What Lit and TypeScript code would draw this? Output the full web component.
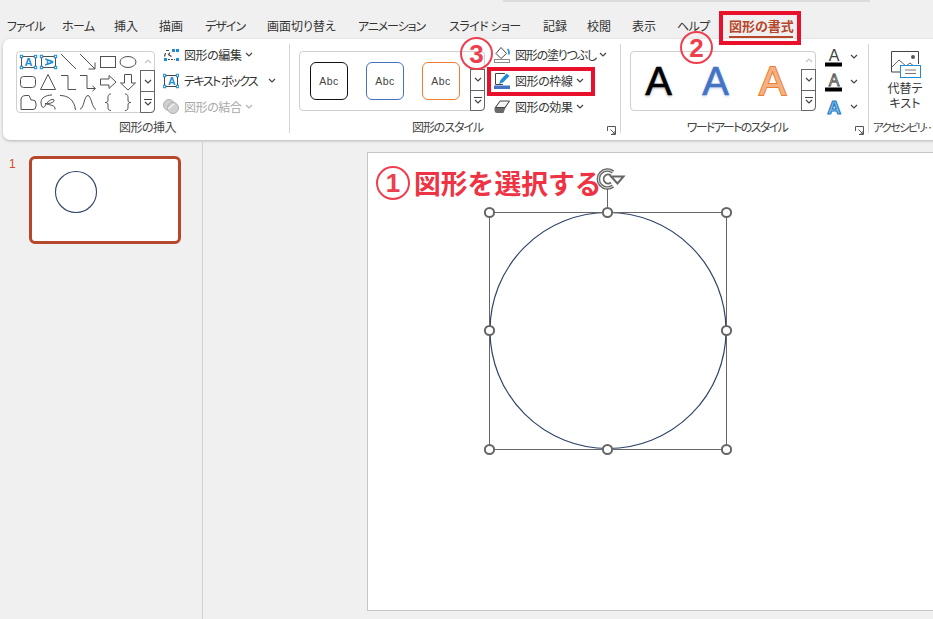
import { LitElement, css, html, svg } from 'lit'
import { customElement } from 'lit/decorators.js'

const TABS = [
  { label: 'ファイル', width: 55, tracking: -1 },
  { label: 'ホーム', width: 52, tracking: -0.6 },
  { label: '挿入', width: 45, tracking: 0 },
  { label: '描画', width: 46, tracking: 0 },
  { label: 'デザイン', width: 62, tracking: -1 },
  { label: '画面切り替え', width: 91, tracking: 0 },
  { label: 'アニメーション', width: 91, tracking: -1.1 },
  { label: 'スライド ショー', width: 94, tracking: -0.5 },
  { label: '記録', width: 44, tracking: 0 },
  { label: '校閲', width: 45, tracking: 0 },
  { label: '表示', width: 45, tracking: 0 },
  { label: 'ヘルプ', width: 52, tracking: -0.6 },
  { label: '図形の書式', width: 70, tracking: 0, active: true },
]

const STROKE = '#505050'
const BLUE = '#1f8dd6'

const handles = (x: number, y: number, w: number, h: number) =>
  [
    [x, y],
    [x + w, y],
    [x, y + h],
    [x + w, y + h],
  ].map(
    ([cx, cy]) =>
      svg`<rect x=${cx - 1.2} y=${cy - 1.2} width="2.4" height="2.4" fill="#fff" stroke=${BLUE} stroke-width="1"></rect>`
  )

const GALLERY_SHAPES = [
  svg`<rect x="3.5" y="4.5" width="14" height="11" fill="none" stroke=${STROKE}></rect>${handles(3.5, 4.5, 14, 11)}<text x="10.5" y="14" font-size="11" font-weight="700" text-anchor="middle" fill=${BLUE} stroke="none" font-family="Liberation Sans">A</text>`,
  svg`<rect x="3.5" y="4.5" width="14" height="11" fill="none" stroke=${STROKE}></rect>${handles(3.5, 4.5, 14, 11)}<text x="0" y="0" transform="translate(7 10) rotate(90)" font-size="11" font-weight="700" text-anchor="middle" fill=${BLUE} stroke="none" font-family="Liberation Sans">A</text>`,
  svg`<path d="M3 2L18 17"></path>`,
  svg`<path d="M2 2L17 17M17 10.5V17H10.5"></path>`,
  svg`<rect x="2.5" y="4.5" width="15" height="11"></rect>`,
  svg`<ellipse cx="10" cy="10" rx="8" ry="5.5"></ellipse>`,
  svg`<rect x="2.5" y="4.5" width="15" height="11" rx="3"></rect>`,
  svg`<path d="M10 2.5L17.5 17.5H2.5Z"></path>`,
  svg`<path d="M3 3.5H10V17.5H18"></path>`,
  svg`<path d="M2 3.5H9V16.5H17M14.5 14L17.5 16.5L14.5 19"></path>`,
  svg`<path d="M2.5 7H11V3.5L18 10L11 16.5V13H2.5Z"></path>`,
  svg`<path d="M6.5 2.5H13.5V11H17.5L10 18L2.5 11H6.5Z"></path>`,
  svg`<path d="M3 17.5V8Q3 3.5 8 3.5H11L13 8H15Q18 8 18 12V14Q18 17.5 15 17.5Z"></path>`,
  svg`<path d="M14 3C8 3 3 6 3 10C3 15 5 17 7 14C9 9 15 6 16 8C17 11 9 12 7 11.5C11 13 18 13 17 17.5"></path>`,
  svg`<path d="M2 3.5C10 3.5 16.5 8 17.5 18"></path>`,
  svg`<path d="M2 17C6 17 6 3.5 10 3.5C13 3.5 14 16 18 17.5"></path>`,
  svg`<path d="M13 2C9.5 2 10 5 10 8C10 10 9 10.5 7 10.5C9 10.5 10 11 10 13C10 16 9.5 18.5 13 18.5"></path>`,
  svg`<path d="M7 2C10.5 2 10 5 10 8C10 10 11 10.5 13 10.5C11 10.5 10 11 10 13C10 16 10.5 18.5 7 18.5"></path>`,
]

const ICONS = {
  edit: svg`<path d="M3 3.5H6M2.5 6L1.5 9.5M7 5.5L5.5 7.5L8.5 9.5" fill="none" stroke="#444" stroke-width="1.2"></path>
    <rect x="9" y="2" width="3" height="3" fill=${BLUE}></rect><rect x="13" y="2" width="3" height="3" fill=${BLUE}></rect>
    <rect x="1" y="11" width="3" height="3" fill=${BLUE}></rect><rect x="13" y="11" width="3" height="3" fill=${BLUE}></rect>
    <path d="M5 12.5H12" stroke="#444" stroke-dasharray="2 1"></path>`,
  textbox: svg`<rect x="1.5" y="2.5" width="13" height="11" fill="none" stroke="#444"></rect>${handles(1.5, 2.5, 13, 11)}<text x="8" y="12" font-size="10.5" font-weight="700" text-anchor="middle" fill=${BLUE} font-family="Liberation Sans">A</text>`,
  merge: svg`<circle cx="6" cy="7" r="5.5" fill="#d0d0d0" stroke="#b0b0b0"></circle><circle cx="10" cy="10" r="5.5" fill="#d0d0d0" stroke="#b0b0b0"></circle><path d="M5 11L11 6" stroke="#f4f4f4" stroke-width="1.2"></path>`,
  fill: svg`<path d="M7 0.5L12.5 6.5L7 11.5L2 6.5Z" fill="#fff" stroke="#444"></path><path d="M13.5 2Q16 5 14.5 7.5" fill="none" stroke=${BLUE} stroke-width="1.6"></path><rect x="0.5" y="12.5" width="15" height="3" fill="#fff" stroke="#8a8a8a"></rect>`,
  line: svg`<path d="M11 0.5H1.5V11.5H9" fill="none" stroke="#444"></path><path d="M5 11L6.5 7L12.5 0.5L15.5 3L9 9.5Z" fill=${BLUE}></path><rect x="0" y="12.5" width="16" height="3.5" fill="#4472c4"></rect>`,
  effect: svg`<path d="M0.5 10L6 3H15.5L11 11L9.5 15H3Q0 15 0.5 10Z" fill="#6a6a6a"></path><path d="M6 3H15.5L11 9.5H1.5Z" fill="#f4f4f4" stroke="#444"></path>`,
}

const icon = (content: unknown) => html`<svg class="btn-icon" viewBox="0 0 16 16">${content}</svg>`

const chevron = () => html`<svg class="chev" viewBox="0 0 8 5"><path d="M1 1L4 4L7 1"></path></svg>`

@customElement('app-root')
export class AppRoot extends LitElement {
  static styles = css`
    :host {
      display: block;
      position: relative;
      width: 933px;
      height: 619px;
      overflow: hidden;
      background: #f0f0f0;
      color: #333;
      font-family: 'Noto Sans CJK JP', 'Liberation Sans', sans-serif;
      font-size: 12px;
      font-feature-settings: 'palt';
    }

    .tabs {
      display: flex;
      align-items: center;
      height: 26px;
      padding: 13px 0 0 7px;
    }

    .tab {
      position: relative;
      flex: none;
      white-space: nowrap;
      line-height: 16px;
    }

    .tab.active {
      color: #b7472a;
      font-size: 13px;
      font-weight: 700;
    }

    .tab.active::after {
      content: '';
      position: absolute;
      left: 0;
      top: 18px;
      width: 64px;
      height: 2px;
      background: #b7472a;
    }

    .top-edge {
      position: absolute;
      left: 503px;
      top: 0;
      width: 367px;
      height: 2px;
      background: #dcdcdc;
    }

    .ribbon {
      display: flex;
      box-sizing: border-box;
      height: 101px;
      width: 960px;
      margin-left: 3px;
      background: #fff;
      border-radius: 7px;
      box-shadow: 0 1px 3px rgba(0, 0, 0, 0.25);
    }

    .group {
      position: relative;
      flex: none;
      display: flex;
      flex-direction: column;
      box-sizing: border-box;
    }

    .g1 {
      width: 286px;
    }
    .g2 {
      width: 330px;
    }
    .g3 {
      width: 247px;
    }
    .g4 {
      width: 64px;
    }

    .sep {
      flex: none;
      width: 1px;
      margin: 5px 0 7px;
      background: #d4d4d4;
    }

    .body {
      display: flex;
      height: 80px;
      padding: 3px 0 0 9px;
      box-sizing: border-box;
    }

    .g1 .body {
      padding-left: 13px;
    }

    .g4 .body {
      padding-left: 0;
    }

    .label {
      height: 18px;
      line-height: 16px;
      text-align: center;
      color: #444;
      white-space: nowrap;
      padding-right: 15px;
    }

    .g1 .label {
      padding: 0 0 0 3px;
      letter-spacing: -0.5px;
    }

    .g2 .label {
      letter-spacing: -1.1px;
    }

    .g3 .label {
      letter-spacing: -1.6px;
    }

    .g4 .label {
      text-align: left;
      padding: 0 0 0 4px;
      font-size: 11.5px;
      letter-spacing: -1.8px;
    }

    .launcher {
      position: absolute;
      right: 4px;
      bottom: 5px;
      width: 9px;
      height: 9px;
    }

    .launcher path {
      fill: none;
      stroke: #555;
    }

    .gallery {
      flex: none;
      display: flex;
      box-sizing: border-box;
      width: 186px;
      height: 60px;
      margin-top: 9px;
      border: 1px solid #cfcfcf;
      border-radius: 4px;
    }

    .shapes {
      width: 139px;
      height: 62px;
    }

    .shape-grid {
      display: grid;
      grid-template-columns: repeat(6, 20px);
      grid-auto-rows: 20px;
      padding-left: 1px;
    }

    .shape-grid svg {
      width: 20px;
      height: 20px;
      display: block;
      fill: none;
      stroke: #505050;
      stroke-width: 1;
    }

    .scroller {
      display: flex;
      flex-direction: column;
      box-sizing: border-box;
      width: 15px;
      margin: -1px -1px -1px auto;
    }

    .scroll {
      flex: 1;
      display: flex;
      align-items: center;
      justify-content: center;
      box-sizing: border-box;
      border: 1px solid #666;
      margin-top: -1px;
      flex-direction: column;
    }

    .scroll:last-child {
      border-radius: 0 0 4px 0;
    }

    .scroll.up {
      border: 0;
      margin-top: 0;
    }

    .scroll.up .chev path {
      stroke: #c4c4c4;
    }

    .more-bar {
      width: 8px;
      height: 1px;
      margin-bottom: 1px;
      background: #444;
    }

    .chev {
      width: 8px;
      height: 5px;
      flex: none;
    }

    .chev path {
      fill: none;
      stroke: #444;
      stroke-width: 1.2;
    }

    .cmds {
      flex: none;
      display: flex;
      flex-direction: column;
      margin-left: 9px;
    }

    .g1 .cmds {
      margin-left: 8px;
    }

    .cmd {
      display: flex;
      align-items: center;
      gap: 5px;
      height: 26px;
      white-space: nowrap;
      letter-spacing: -0.4px;
    }

    .cmd.off {
      color: #a8a8a8;
    }

    .cmd .chev {
      margin-left: -2px;
    }

    .cmd.off .chev path {
      stroke: #b4b4b4;
    }

    .cmd.wide {
      letter-spacing: -1.5px;
    }

    .cmd.wide .chev {
      margin-left: 6px;
    }

    .cmd.tight {
      letter-spacing: -1.2px;
    }

    .btn-icon {
      width: 16px;
      height: 16px;
      flex: none;
    }

    .abc-row {
      display: flex;
      align-items: center;
      gap: 18px;
      padding-left: 10px;
    }

    .abc {
      display: flex;
      align-items: center;
      justify-content: center;
      box-sizing: border-box;
      width: 38px;
      height: 38px;
      border: 1.5px solid;
      border-radius: 6px;
      color: #444;
      font-family: 'Liberation Sans', sans-serif;
      font-size: 10.5px;
      letter-spacing: 0.4px;
    }

    .abc.black {
      border-color: #111;
    }
    .abc.blue {
      border-color: #4472c4;
    }
    .abc.orange {
      border-color: #ed7d31;
    }

    .wa-row {
      display: flex;
      align-items: center;
      padding-left: 14px;
      gap: 30px;
    }

    .wa {
      font-family: 'Liberation Sans', sans-serif;
      font-size: 40px;
      line-height: 44px;
      width: 27px;
      text-align: center;
      -webkit-text-stroke: 0.6px currentColor;
    }

    .wa.black {
      color: #000;
      text-shadow: 0 1px 3px rgba(0, 0, 0, 0.4);
    }

    .wa.blue {
      color: #4472c4;
      text-shadow: 0 1px 3px rgba(68, 114, 196, 0.4);
    }

    .wa.orange {
      color: #f4b183;
      -webkit-text-stroke: 2px #ed7d31;
      paint-order: stroke fill;
    }

    .wa-cmds {
      flex: none;
      display: flex;
      flex-direction: column;
      margin: 2px 0 0 9px;
    }

    .wa-cmd {
      display: flex;
      align-items: center;
      gap: 7px;
      height: 26px;
    }

    .wa-icon {
      width: 18px;
      height: 20px;
      flex: none;
    }

    .alt {
      flex: none;
      display: flex;
      flex-direction: column;
      align-items: center;
      width: 72px;
      padding-top: 8px;
      text-align: center;
      line-height: 15px;
    }

    .alt svg {
      width: 34px;
      height: 30px;
    }

    .main {
      display: flex;
      height: 479px;
    }

    .side {
      flex: none;
      display: flex;
      align-items: flex-start;
      box-sizing: border-box;
      width: 203px;
      padding: 16px 0 0 9px;
      border-right: 1px solid #d2d2d2;
    }

    .num {
      width: 20px;
      line-height: 16px;
      color: #d84a28;
      font-family: 'Liberation Sans', sans-serif;
      font-size: 12px;
    }

    .thumb {
      box-sizing: border-box;
      width: 152px;
      height: 88px;
      background: #fff;
      border: 3px solid #b7472a;
      border-radius: 6px;
    }

    .thumb svg {
      display: block;
      width: 146px;
      height: 82px;
    }

    .canvas {
      flex: 1;
      min-width: 0;
      padding: 12px 0 0 164px;
      overflow: hidden;
    }

    .slide {
      position: relative;
      box-sizing: border-box;
      width: 640px;
      height: 459px;
      background: #fff;
      border: 1px solid #c6c6c6;
    }

    .slide svg {
      position: absolute;
      left: 0;
      top: 0;
      width: 600px;
      height: 457px;
    }

    .title {
      position: absolute;
      left: 8px;
      top: 12px;
      display: flex;
      align-items: center;
      gap: 4px;
      color: #ee3344;
      font-size: 26.8px;
      font-weight: 700;
      line-height: 36px;
      white-space: nowrap;
      font-feature-settings: normal;
    }

    .badge {
      display: flex;
      align-items: center;
      justify-content: center;
      box-sizing: border-box;
      width: 34px;
      height: 34px;
      border: 2.5px solid #ee3f4f;
      border-radius: 50%;
      color: #ee3f4f;
      font-family: 'Liberation Sans', sans-serif;
      font-size: 26px;
      font-weight: 700;
      line-height: 1;
    }

    .note {
      position: absolute;
      width: 33px;
      height: 33px;
    }

    .n2 {
      left: 680px;
      top: 31px;
    }

    .n3 {
      left: 460px;
      top: 37px;
    }

    .redbox {
      position: absolute;
      box-sizing: border-box;
      border: 4px solid #e8102a;
    }

    .rb-tab {
      left: 719px;
      top: 11px;
      width: 82px;
      height: 34px;
    }

    .rb-line {
      left: 487px;
      top: 67px;
      width: 108px;
      height: 29px;
    }
  `

  private _scroller() {
    return html`
      <div class="scroller">
        <div class="scroll up"><svg class="chev" viewBox="0 0 8 5"><path d="M1 4L4 1L7 4"></path></svg></div>
        <div class="scroll">${chevron()}</div>
        <div class="scroll"><div class="more-bar"></div>${chevron()}</div>
      </div>
    `
  }

  private _launcher() {
    return html`<svg class="launcher" viewBox="0 0 9 9"><path d="M0.5 5V0.5H8.5V8.5H4M3.5 3.5L8 8M8 5V8H5"></path></svg>`
  }

  private _waIcon(kind: 'fill' | 'line' | 'effect') {
    if (kind === 'effect') {
      return html`<svg class="wa-icon" viewBox="0 0 18 20">
        <text x="9" y="17" font-size="19" font-weight="700" text-anchor="middle" font-family="Liberation Sans" fill="#8cc4ec" stroke="#1f7cc4" stroke-width="1.2">A</text>
      </svg>`
    }
    return html`<svg class="wa-icon" viewBox="0 0 18 20">
      <text x="9" y="14" font-size="16" text-anchor="middle" font-family="Liberation Sans" fill=${kind === 'fill' ? '#444' : '#fff'} stroke=${kind === 'fill' ? 'none' : '#444'} stroke-width="0.8">A</text>
      <rect x="0" y="15.5" width="17" height="4" fill="#000"></rect>
    </svg>`
  }

  render() {
    return html`
      <div class="top-edge"></div>
      <div class="tabs">
        ${TABS.map(
          (t) => html`<div class="tab ${t.active ? 'active' : ''}" style="width:${t.width}px;letter-spacing:${t.tracking}px">${t.label}</div>`
        )}
      </div>

      <div class="ribbon">
        <section class="group g1">
          <div class="body">
            <div class="gallery shapes">
              <div class="shape-grid">${GALLERY_SHAPES.map((s) => html`<svg viewBox="0 0 20 20">${s}</svg>`)}</div>
              ${this._scroller()}
            </div>
            <div class="cmds">
              <div class="cmd">${icon(ICONS.edit)}<span>図形の編集</span>${chevron()}</div>
              <div class="cmd wide">${icon(ICONS.textbox)}<span>テキスト ボックス</span>${chevron()}</div>
              <div class="cmd off">${icon(ICONS.merge)}<span>図形の結合</span>${chevron()}</div>
            </div>
          </div>
          <div class="label">図形の挿入</div>
        </section>
        <div class="sep"></div>

        <section class="group g2">
          <div class="body">
            <div class="gallery">
              <div class="abc-row">
                <div class="abc black">Abc</div>
                <div class="abc blue">Abc</div>
                <div class="abc orange">Abc</div>
              </div>
              ${this._scroller()}
            </div>
            <div class="cmds">
              <div class="cmd tight">${icon(ICONS.fill)}<span>図形の塗りつぶし</span>${chevron()}</div>
              <div class="cmd">${icon(ICONS.line)}<span>図形の枠線</span>${chevron()}</div>
              <div class="cmd">${icon(ICONS.effect)}<span>図形の効果</span>${chevron()}</div>
            </div>
          </div>
          <div class="label">図形のスタイル</div>
          ${this._launcher()}
        </section>
        <div class="sep"></div>

        <section class="group g3">
          <div class="body">
            <div class="gallery">
              <div class="wa-row">
                <div class="wa black">A</div>
                <div class="wa blue">A</div>
                <div class="wa orange">A</div>
              </div>
              ${this._scroller()}
            </div>
            <div class="wa-cmds">
              <div class="wa-cmd">${this._waIcon('fill')}${chevron()}</div>
              <div class="wa-cmd">${this._waIcon('line')}${chevron()}</div>
              <div class="wa-cmd">${this._waIcon('effect')}${chevron()}</div>
            </div>
          </div>
          <div class="label">ワードアートのスタイル</div>
          ${this._launcher()}
        </section>
        <div class="sep"></div>

        <section class="group g4">
          <div class="body">
            <div class="alt">
              <svg viewBox="0 0 34 30">
                <path d="M25 22H3.5V1.5H30.5V14" fill="none" stroke="#444"></path>
                <path d="M4 17L11 10L18 16L22 13L27 17" fill="none" stroke="#666"></path>
                <circle cx="25" cy="7" r="2" fill="#555"></circle>
                <rect x="12.5" y="15.5" width="20" height="12" fill="#fff" stroke="${BLUE}"></rect>
                <path d="M17 20H28M17 23.5H28" stroke="#777"></path>
              </svg>
              <div>代替テ</div>
              <div>キスト</div>
            </div>
          </div>
          <div class="label">アクセシビリ…</div>
        </section>
      </div>

      <div class="main">
        <aside class="side">
          <div class="num">1</div>
          <div class="thumb">
            <svg viewBox="0 0 146 82"><circle cx="44" cy="33" r="20.5" fill="none" stroke="#2f4468" stroke-width="1.1"></circle></svg>
          </div>
        </aside>
        <div class="canvas">
          <div class="slide">
            <svg viewBox="368 153 600 457">
              <circle cx="608" cy="330.5" r="118" fill="none" stroke="#2f4468" stroke-width="1.2"></circle>
              <path d="M489.5 212.5H726.5V449.5H489.5ZM607.5 212V188" fill="none" stroke="#666" stroke-width="1"></path>
              ${[
                [489.5, 212.5],
                [607.5, 212.5],
                [726.5, 212.5],
                [489.5, 330.5],
                [726.5, 330.5],
                [489.5, 449.5],
                [607.5, 449.5],
                [726.5, 449.5],
              ].map(([x, y]) => svg`<circle cx=${x} cy=${y} r="4.6" fill="#fff" stroke="#666" stroke-width="2"></circle>`)}
              <path d="M613 172A9 9 0 1 0 613 186" fill="none" stroke="#666" stroke-width="3.6"></path>
              <path d="M613 172A9 9 0 1 0 613 186" fill="none" stroke="#fff" stroke-width="0.8"></path>
              <path d="M611 175.5A4.5 4.5 0 1 0 611 182.5" fill="none" stroke="#666" stroke-width="1.8"></path>
              <path d="M611 176.5H623.5L617.5 183.5Z" fill="#fff" stroke="#666" stroke-width="2"></path>
            </svg>
            <div class="title"><span class="badge">1</span><span>図形を選択する</span></div>
          </div>
        </div>
      </div>

      <div class="redbox rb-tab"></div>
      <div class="redbox rb-line"></div>
      <div class="note n2 badge">2</div>
      <div class="note n3 badge">3</div>
    `
  }
}
